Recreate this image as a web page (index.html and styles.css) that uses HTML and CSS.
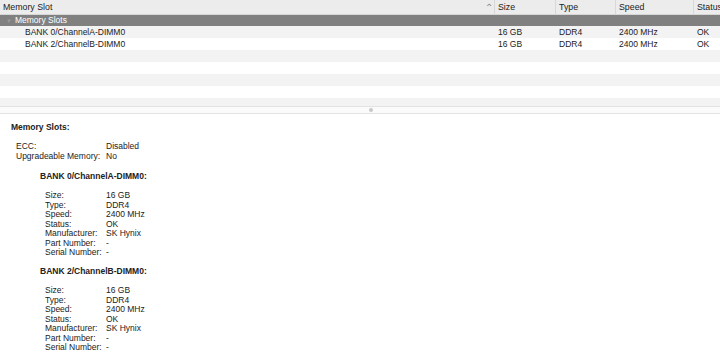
FILE: index.html
```html
<!DOCTYPE html>
<html lang="en">
<head>
    <meta charset="UTF-8">
    <title>Memory</title>
    <link rel="stylesheet" href="styles.css">
</head>
<body>
    <div class="table">
        <div class="row header">
            <div class="cell first">Memory Slot <span class="sort">&#8963;</span></div>
            <div class="cell">Size</div>
            <div class="cell">Type</div>
            <div class="cell">Speed</div>
            <div class="cell">Status</div>
        </div>
        <div class="row group">
            <div class="cell"><span class="tri">&#9660;</span>Memory Slots</div>
        </div>
        <div class="row item">
            <div class="cell name">BANK 0/ChannelA-DIMM0</div>
            <div class="cell">16 GB</div>
            <div class="cell">DDR4</div>
            <div class="cell">2400 MHz</div>
            <div class="cell">OK</div>
        </div>
        <div class="row item">
            <div class="cell name">BANK 2/ChannelB-DIMM0</div>
            <div class="cell">16 GB</div>
            <div class="cell">DDR4</div>
            <div class="cell">2400 MHz</div>
            <div class="cell">OK</div>
        </div>
        <div class="row item"></div>
        <div class="row item"></div>
        <div class="row item"></div>
        <div class="row item"></div>
        <div class="row item last"></div>
    </div>
    <div class="splitter"><span class="dot"></span></div>

    <div class="details">
        <div class="title">Memory Slots:</div>
        <div class="props top">
            <span>ECC:</span><span>Disabled</span>
            <span>Upgradeable Memory:</span><span>No</span>
        </div>

        <div class="bank">BANK 0/ChannelA-DIMM0:</div>
        <div class="props">
            <span>Size:</span><span>16 GB</span>
            <span>Type:</span><span>DDR4</span>
            <span>Speed:</span><span>2400 MHz</span>
            <span>Status:</span><span>OK</span>
            <span>Manufacturer:</span><span>SK Hynix</span>
            <span>Part Number:</span><span>-</span>
            <span>Serial Number:</span><span>-</span>
        </div>

        <div class="bank">BANK 2/ChannelB-DIMM0:</div>
        <div class="props">
            <span>Size:</span><span>16 GB</span>
            <span>Type:</span><span>DDR4</span>
            <span>Speed:</span><span>2400 MHz</span>
            <span>Status:</span><span>OK</span>
            <span>Manufacturer:</span><span>SK Hynix</span>
            <span>Part Number:</span><span>-</span>
            <span>Serial Number:</span><span>-</span>
        </div>
    </div>
</body>
</html>
```

FILE: styles.css
```css
body {
    margin: 0;
    font-family: "Liberation Sans", Arial, sans-serif;
    font-size: 8.5px;
    color: #222;
    background-color: white;
    width: 720px;
    height: 359px;
    overflow: hidden;
}
.row {
    display: grid;
    grid-template-columns: 494px 61px 60px 78px 1fr;
    height: 12px;
    line-height: 12px;
}
.cell {
    padding-left: 3px;
    white-space: nowrap;
    overflow: hidden;
}
.header {
    height: 14px;
    line-height: 14px;
    background-color: #ececec;
    border-bottom: 1px solid #d6d6d6;
    font-size: 8.8px;
}
.header .cell {
    border-left: 1px solid #d8d8d8;
}
.header .cell:first-child {
    border-left: none;
}
.header .first {
    display: flex;
    justify-content: space-between;
    padding-right: 1px;
}
.sort {
    color: #8a8a8a;
    font-size: 10px;
    line-height: 16px;
}
.group {
    height: 11px;
    line-height: 11px;
    background-color: #808080;
    color: white;
    grid-template-columns: 1fr;
}
.tri {
    color: #9a9a9a;
    font-size: 6px;
    margin: 0 3px 0 3px;
}
.item:nth-child(odd) {
    background-color: #f3f3f3;
}
.item .name {
    padding-left: 25px;
}
.item .cell + .cell {
    padding-left: 4px;
}
.last {
    height: 8px;
}
.splitter {
    height: 6px;
    border-top: 1px solid #e2e2e2;
    border-bottom: 1px solid #e2e2e2;
    background-color: #fbfbfb;
    display: flex;
    justify-content: center;
    align-items: center;
}
.dot {
    width: 4px;
    height: 4px;
    border-radius: 50%;
    background-color: #c8c8c8;
    margin-left: 22px;
}
.details {
    padding: 9px 0 0 11px;
    line-height: 9.5px;
}
.title, .bank {
    font-weight: bold;
}
.props {
    display: grid;
    grid-template-columns: 90px 1fr;
    margin: 9.5px 0 9.5px 5px;
}
.bank {
    margin-left: 29px;
}
.props.top {
    margin-bottom: 11px;
}
.bank + .props {
    margin-left: 34px;
    grid-template-columns: 61px 1fr;
}
```
